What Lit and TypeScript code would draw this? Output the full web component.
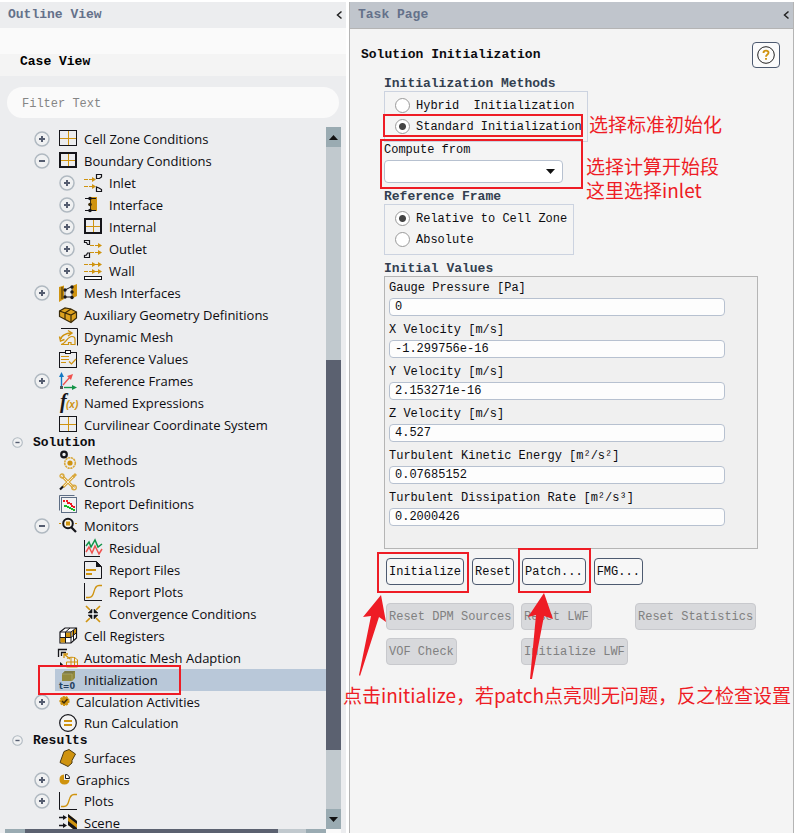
import { LitElement, html, svg, css, nothing } from "lit";
import type { TemplateResult } from "lit";
import { customElement, property } from "lit/decorators.js";
import { classMap } from "lit/directives/class-map.js";

const G = "#cf930f";
const K = "#15151a";

const grid = (w: number) => svg`
  <path d="M9 1V16M1 8.500H17" stroke=${G} stroke-width="1" shape-rendering="crispEdges"/>
  <rect x=${w / 2} y=${w / 2} width=${18 - w} height=${16 - w} fill="none" stroke=${K} stroke-width=${w}/>`;

const flow = (x: number, y: number) => svg`
  <path d="M${x} ${y}h4M${x + 5} ${y}h4" stroke=${G}/>
  <path d="M${x + 8} ${y - 2.5}l4 2.500l-4 2.500z" fill=${G}/>`;

const plot = svg`
  <path d="M.5 0V17.500H18" fill="none" stroke=${K}/>
  <path d="M2 14.500H5C8 14.500 9 12.500 10 8.500S12 2.500 15 2.500H18" fill="none" stroke=${G} stroke-width="1.300"/>`;

const icons: Record<string, TemplateResult | ReturnType<typeof svg>> = {
  grid: grid(1),
  gridBold: grid(2),
  inlet: svg`${flow(0, 5.5)}${flow(0, 12.5)}
    <path d="M12.500 .5H17.500V3L15.500 4.500H12.500ZM12.500 13L15 14L17.500 15.500V17.500H12.500Z" fill="none" stroke=${K} stroke-width="1.200"/>`,
  interface: svg`
    <rect x="6" y="1" width="7" height="14" fill=${G}/>
    <path d="M1 2.500H12M1 14.500H12" stroke=${K}/>
    <path d="M6.500 2V15" stroke=${K} stroke-width=".8"/>
    <circle cx="6" cy="2.500" r="1.800" fill=${K}/><circle cx="6" cy="8.500" r="1.800" fill="#3a2a08"/><circle cx="6" cy="14.500" r="1.800" fill=${K}/>`,
  outlet: svg`${flow(6, 5.5)}${flow(6, 12.5)}
    <path d="M.5 .5H5.500V4.500H3.500L2.500 2.500H.5ZM5.500 13V17.500H.5V15.500L2.500 15L3.500 13Z" fill="none" stroke=${K} stroke-width="1.200"/>`,
  wall: svg`${flow(0, 2.5)}${flow(6, 2.5)}${flow(0, 9.5)}${flow(6, 9.5)}
    <rect x=".5" y="14.500" width="17" height="3" fill="#fff" stroke=${K}/>`,
  meshInterfaces: svg`
    <path d="M0 3L5 1.500V15L0 18ZM13 2L18 0V12L13 14.500Z" fill=${G}/>
    <path d="M3 3V15" stroke="#3a2a08"/>
    <path d="M6 6L13 2.500M6 13L13 13" stroke=${K}/>
    <path d="M6 6V13M13 3V14" stroke="#6b6b70"/>
    <circle cx="6" cy="6" r="1.700" fill=${K}/><circle cx="13" cy="3" r="1.700" fill=${K}/>
    <circle cx="13" cy="8" r="1.700" fill=${K}/><circle cx="6" cy="13" r="1.700" fill=${K}/><circle cx="13" cy="13.500" r="1.700" fill=${K}/>`,
  geometry: svg`
    <path d="M.5 5L6 2L12 3L17.500 6V12L12 16.500L.5 10.500Z" fill="#dda21f" stroke="#3a2a08" stroke-width="1.200"/>
    <path d="M.5 5L12 9L17.500 6M12 9V16M6 7V13M6 7L12 3" fill="none" stroke="#3a2a08" stroke-width="1.200"/>`,
  dynamic: svg`
    <path d="M2 .5H18.500V17.500" fill="none" stroke=${K}/>
    <path d="M2 11C2 8 7 5 12 5M9 2.500L13 5L9 8M.5 8.500L1.500 13L5.500 11.500" fill="none" stroke=${G} stroke-width="1.400"/>
    <path d="M2 16.500C7 16 8 8.500 13 8.500C15.500 8.500 16 9.500 16 11V16.500H12V14.500H9.500V16.500Z" fill="none" stroke=${G} stroke-width="1.200"/>`,
  values: svg`
    <rect x=".5" y="2.500" width="17" height="15" fill="none" stroke=${K}/>
    <rect x="6.500" y=".5" width="5" height="3" fill="#fff" stroke=${K}/>
    <path d="M2 6.500H10M2 9.500H10M2 12.500H7M10 11.500L12.500 14L17 9" fill="none" stroke=${G} stroke-width="1.200"/>`,
  frames: svg`
    <path d="M2.500 4V14" stroke="#1479c4" stroke-width="1.400"/><path d="M0 5L2.500 0L5 5Z" fill="#1479c4"/>
    <path d="M4 13L11 5" stroke="#f0524f" stroke-width="1.400"/><path d="M8 4L14 2L12 8Z" fill="#f0524f"/>
    <path d="M5 15.500H14" stroke="#129447" stroke-width="1.400"/><path d="M13 13L18 15.500L13 18Z" fill="#129447"/>
    <rect x="1" y="14" width="3" height="3" fill="#555"/>`,
  expression: svg`
    <text x="1" y="14" font-family="Liberation Serif, serif" font-size="20" font-weight="bold" font-style="italic" fill=${K}>f</text>
    <text x="7" y="14" font-family="Liberation Sans, sans-serif" font-size="10" font-weight="bold" font-style="italic" fill=${G}>(x)</text>`,
  methods: svg`
    <circle cx="5" cy="3.500" r="2.800" fill="none" stroke=${K} stroke-width="2.200"/>
    <circle cx="11" cy="12" r="5.300" fill="none" stroke="#d9a83c" stroke-width="1.600" stroke-dasharray="2.200 .6"/>
    <circle cx="11" cy="12" r="2.600" fill=${G}/>`,
  controls: svg`
    <path d="M3 3L15 15M4 14L15 3" stroke="#d9a83c" stroke-width="3"/>
    <path d="M3 3L15 15M5 13L15 3" stroke="#f6e8c8" stroke-width="1"/>
    <circle cx="3" cy="3" r="2" fill="none" stroke="#d9a83c" stroke-width="1.300"/>
    <circle cx="15" cy="14.500" r="2.300" fill="none" stroke="#d9a83c" stroke-width="1.300"/>
    <path d="M13 3L16 0L18 2L15 5Z" fill="#d9a83c"/><path d="M1 16.500L4 13.500" stroke=${K} stroke-width="2.200"/>`,
  definitions: svg`
    <path d="M.5 15.500V.5H15.500" fill="none" stroke="#5d6d84"/>
    <rect x="2.500" y="2.500" width="15" height="15" fill="#f3f3f3" stroke="#5d6d84"/>
    <g fill="#f01820"><rect x="4" y="5" width="2" height="2"/><rect x="7" y="5" width="2" height="2"/><rect x="8" y="7" width="3" height="2"/><rect x="11" y="8" width="2" height="2"/><rect x="12" y="10" width="2" height="2"/><rect x="14" y="11" width="2" height="2"/></g>
    <g fill="#15b825"><rect x="5" y="10" width="3" height="2"/><rect x="8" y="11" width="2" height="2"/><rect x="10" y="12" width="2" height="2"/><rect x="12" y="13" width="2" height="2"/><rect x="14" y="14" width="2" height="2"/></g>`,
  monitors: svg`
    <path d="M0 6.500H2M16 6.500H18" stroke=${G}/>
    <circle cx="9" cy="6.500" r="4.800" fill="#f8f4e8" stroke=${K} stroke-width="2"/>
    <rect x="7" y="4.500" width="4" height="4" fill=${G}/><path d="M12 10L17 15" stroke=${K} stroke-width="2.300"/>`,
  residual: svg`
    <path d="M.5 1V17.500H16" fill="none" stroke=${K}/>
    <path d="M2 7L5 3L7 8L11 1L14 8L18 5" fill="none" stroke="#129447" stroke-width="1.500"/>
    <path d="M2 13L5 8L8 14L11 7L15 15L18 10" fill="none" stroke="#f0524f" stroke-width="1.500"/>`,
  file: svg`
    <path d="M.5 .5H12.500L17.500 5.500V17.500H.5Z" fill="none" stroke=${K}/><path d="M12 0L18 6H12Z" fill=${K}/>
    <path d="M2 9H12M2 13H8" stroke=${G} stroke-width="1.800"/>`,
  plot,
  convergence: svg`
    <path d="M2 1L6 5M16 1L12 5M2 17L6 13M16 17L12 13" stroke=${G} stroke-width="1.700"/>
    <path d="M8 4V8H4ZM10 4V8H14ZM8 14V10H4ZM10 14V10H14Z" fill=${K} stroke=${K} stroke-width=".5"/>`,
  registers: svg`
    <path d="M1 5L6 1H17.500V11L12 16H1Z" fill="#fff" stroke=${K} stroke-width="1.200"/>
    <path d="M7 5.500H12V10H7ZM1.500 10.500H6.500V15.500H1.500ZM13 4.500L17 1.500V6L13 9Z" fill=${G}/>
    <path d="M1 5H12L17 1M12 5V16M6.500 5V16M1 10.500H12L17 6M6.500 5L11 1M14.500 3V13" fill="none" stroke=${K}/>`,
  adaption: svg`
    <path d="M-.5 8V.5H8M2.500 7V3.500H7" fill="none" stroke=${K} stroke-width="1.300"/>
    <path d="M5 5L11 10M5 9V5H9" fill="none" stroke=${G} stroke-width="1.300"/>
    <path d="M8 10C9 8 16 7 18.500 11V18H7.500V13H18.500M12 8V18M15.500 8V18" fill="none" stroke=${G}/>
    <path d="M1 13L4 15.500L1 18Z" fill=${K}/>`,
  initialization: svg`
    <path d="M3 3L6 0H16V7L13 10H3Z" fill="#938a3d"/><path d="M3 3H13L16 0H6Z" fill="#7d7a45"/>
    <path d="M3 3H13V10" fill="none" stroke="#b3ad72" stroke-width=".7"/>
    <text x="0" y="18" font-family="DejaVu Sans, sans-serif" font-size="8" font-weight="bold" fill="#25415f">t=0</text>`,
  run: svg`<circle cx="9" cy="9" r="8.300" fill="#f4f4f4" stroke=${K} stroke-width="1.200"/>
    <path d="M5 7H13M5 11H13" stroke=${G} stroke-width="2"/>`,
  surfaces: svg`<path d="M1 13.500L5 2.500L10 .5L16.500 5L13 11.500L13 14L9 17.500Z" fill=${G} stroke="#4b3a12"/>`,
  scene: svg`
    <path d="M0 3.500H6M0 11.500H6" stroke=${K} stroke-width="1.500"/><path d="M4 1L8 3.500L4 6ZM4 9L8 11.500L4 14Z" fill=${K}/>
    <path d="M9 0L18 7V18L9 11Z" fill=${G}/><path d="M9 0L18 7V10L9 3ZM9 7L18 14V18L9 11Z" fill=${K}/>`,
  activities: svg`
    <circle cx="5.500" cy="5" r="4.300" fill=${G} stroke=${G} stroke-width="1.600" stroke-dasharray="2 1"/>
    <path d="M3 5L5 7L8.500 3" fill="none" stroke="#3a2a08" stroke-width="1.500"/>`,
  graphics: svg`
    <path d="M5 .5A5 5 0 1 0 10.500 6H5Z" fill=${G}/><path d="M6.500 .5V4.500H10.500C10.500 2 9 .5 6.500 .5Z" fill="#fff" stroke=${K}/>`,
};

interface Item {
  label: string;
  level: number;
  icon?: string;
  fold?: "+" | "-";
  small?: boolean;
  selected?: boolean;
}

const items: Item[] = [
  { label: "Cell Zone Conditions", level: 1, icon: "grid", fold: "+" },
  { label: "Boundary Conditions", level: 1, icon: "gridBold", fold: "-" },
  { label: "Inlet", level: 2, icon: "inlet", fold: "+" },
  { label: "Interface", level: 2, icon: "interface", fold: "+" },
  { label: "Internal", level: 2, icon: "gridBold", fold: "+" },
  { label: "Outlet", level: 2, icon: "outlet", fold: "+" },
  { label: "Wall", level: 2, icon: "wall", fold: "+" },
  { label: "Mesh Interfaces", level: 1, icon: "meshInterfaces", fold: "+" },
  { label: "Auxiliary Geometry Definitions", level: 1, icon: "geometry" },
  { label: "Dynamic Mesh", level: 1, icon: "dynamic" },
  { label: "Reference Values", level: 1, icon: "values" },
  { label: "Reference Frames", level: 1, icon: "frames", fold: "+" },
  { label: "Named Expressions", level: 1, icon: "expression" },
  { label: "Curvilinear Coordinate System", level: 1, icon: "grid" },
  { label: "Solution", level: 0, fold: "-" },
  { label: "Methods", level: 1, icon: "methods" },
  { label: "Controls", level: 1, icon: "controls" },
  { label: "Report Definitions", level: 1, icon: "definitions" },
  { label: "Monitors", level: 1, icon: "monitors", fold: "-" },
  { label: "Residual", level: 2, icon: "residual" },
  { label: "Report Files", level: 2, icon: "file" },
  { label: "Report Plots", level: 2, icon: "plot" },
  { label: "Convergence Conditions", level: 2, icon: "convergence" },
  { label: "Cell Registers", level: 1, icon: "registers" },
  { label: "Automatic Mesh Adaption", level: 1, icon: "adaption" },
  { label: "Initialization", level: 1, icon: "initialization", selected: true },
  { label: "Calculation Activities", level: 1, icon: "activities", fold: "+", small: true },
  { label: "Run Calculation", level: 1, icon: "run" },
  { label: "Results", level: 0, fold: "-" },
  { label: "Surfaces", level: 1, icon: "surfaces" },
  { label: "Graphics", level: 1, icon: "graphics", fold: "+", small: true },
  { label: "Plots", level: 1, icon: "plot", fold: "+" },
  { label: "Scene", level: 1, icon: "scene" },
];

const shared = css`
  * { box-sizing: border-box; }
  button, input, select { font: inherit; color: inherit; margin: 0; }
  .bar {
    display: flex; justify-content: space-between; align-items: center;
    height: 26px; padding: 0 3px 0 8px;
    font-weight: bold; font-size: 13px; color: #64718a;
  }
  .bar h2 { margin: 0; font-size: 13px; line-height: 16px; }
  .collapse { display: flex; border: 0; padding: 0; background: none; }
`;

const collapse = html`<button class="collapse" aria-label="Collapse">
  <svg width="7" height="10" viewBox="0 0 7 10"><path d="M5.500 1.500L1.500 5L5.500 8.500" fill="none" stroke="#222" stroke-width="1.500"/></svg>
</button>`;

@customElement("outline-view")
export class OutlineView extends LitElement {
  static styles = [shared, css`
    :host { display: flex; flex-direction: column; min-height: 0; background: #ecedef; }
    .spacer { height: 26px; flex: none; background: #fafafa; }
    .bar { flex: none; }
    .case { flex: none; height: 22px; margin: 0; padding-left: 20px; background: #f4f4f4; font-size: 13px; line-height: 16px; color: #000; }
    .search { flex: none; padding: 11px 7px 9px; }
    .search input {
      display: block; width: 100%; height: 31px; padding: 2px 15px 0;
      border: 0; border-radius: 16px; background: #fafafa; font-size: 12px;
    }
    .search input::placeholder { color: #858585; opacity: 1; }
    .area {
      flex: 1; min-height: 0; margin-right: 5px;
      display: grid; grid-template: minmax(0, 1fr) 4px / minmax(0, 1fr) 15px;
    }
    .tree { overflow: hidden; list-style: none; margin: 0; padding: 1px 0 0; font: 13px/22px "Open Sans", sans-serif; color: #0c0c10; }
    .row { display: flex; align-items: center; height: 22px; padding-left: 34px; white-space: nowrap; }
    .row.deep { padding-left: 59px; }
    .row.small { height: 21px; }
    .row.head { height: 13px; padding-left: 12px; font: bold 13px/13px "Liberation Mono", monospace; }
    .fold {
      flex: none; width: 16px; height: 16px; padding: 0; display: flex;
      border: 0; background: none;
    }
    .head .fold { width: 11px; height: 11px; margin-right: 10px; }
    .icon { flex: none; width: 18px; height: 18px; overflow: visible; margin: 0 7px 0 9px; }
    .small .icon { width: 11px; height: 11px; margin-right: 6px; }
    .nofold { width: 16px; flex: none; }
    .row.selected { background: linear-gradient(90deg, transparent 55px, #b9c8d9 55px); }
    .v { display: flex; flex-direction: column; background: #c1c9ce; }
    .v .end, .h .end { display: flex; align-items: center; justify-content: center; flex: none; background: #9aabb2; }
    .v .end { height: 20px; }
    .v .before { flex: 213; }
    .v .thumb { flex: 390; background: #5b6170; }
    .v .after { flex: 59; }
    .h { display: flex; background: #c1c9ce; margin-left: 5px; }
    .h .end { width: 20px; }
    .h .thumb { flex: 253; background: #5b6170; }
    .h .after { flex: 28; }
    .corner { background: #fafafa; }
  `];

  private fold(item: Item) {
    if (!item.fold) return item.level ? html`<span class="nofold"></span>` : nothing;
    return html`<button class="fold" aria-label=${(item.fold === "+" ? "Expand " : "Collapse ") + item.label}>
      <svg width="100%" height="100%" viewBox="0 0 16 16">
        <circle cx="8" cy="8" r="7" fill="#f0f1f2" stroke="#b0b9c1" stroke-width="1.500"/>
        <path d=${item.fold === "+" ? "M5 8H11M8 5V11" : "M5 8H11"} stroke="#555d70" stroke-width="2"/>
      </svg>
    </button>`;
  }

  render() {
    return html`
      <div class="bar"><h2>Outline View</h2>${collapse}</div>
      <div class="spacer"></div>
      <h3 class="case">Case View</h3>
      <div class="search"><input type="text" placeholder="Filter Text" aria-label="Filter Text"></div>
      <div class="area">
        <ul class="tree">
          ${items.map((item) => html`
            <li class=${classMap({ row: true, deep: item.level === 2, head: item.level === 0, small: !!item.small, selected: !!item.selected })}>
              ${this.fold(item)}
              ${item.icon ? html`<svg class="icon" viewBox=${item.small ? "0 0 11 11" : "0 0 18 18"}>${icons[item.icon]}</svg>` : nothing}
              <span>${item.label}</span>
            </li>`)}
        </ul>
        <div class="v">
          <span class="end"><svg width="9" height="5" viewBox="0 0 9 5"><path d="M0 5L4.500 0L9 5Z" fill="#111"/></svg></span>
          <span class="before"></span><span class="thumb"></span><span class="after"></span>
          <span class="end"><svg width="9" height="5" viewBox="0 0 9 5"><path d="M0 0L4.500 5L9 0Z" fill="#111"/></svg></span>
        </div>
        <div class="h"><span class="end"></span><span class="thumb"></span><span class="after"></span><span class="end"></span></div>
        <div class="corner"></div>
      </div>`;
  }
}

const fields = [
  ["Gauge Pressure [Pa]", "0"],
  ["X Velocity [m/s]", "-1.299756e-16"],
  ["Y Velocity [m/s]", "2.153271e-16"],
  ["Z Velocity [m/s]", "4.527"],
  ["Turbulent Kinetic Energy [m²/s²]", "0.07685152"],
  ["Turbulent Dissipation Rate [m²/s³]", "0.2000426"],
];

@customElement("task-page")
export class TaskPage extends LitElement {
  @property() heading = "Solution Initialization";

  static styles = [shared, css`
    :host { display: block; background: #f4f4f4; border: solid #b4b4b4; border-width: 0 1px; font-size: 12px; }
    .bar { background: #c0c5cc; height: 27px; border-bottom: 1px solid #b4b4b4; }
    .title { display: flex; justify-content: space-between; align-items: center; margin: 13px 13px 0 11px; }
    h1 { margin: 0; font-size: 13px; line-height: 16px; }
    .help { display: flex; align-items: center; justify-content: center; width: 28px; height: 26px; padding: 0; border: 1px solid #4d5a70; border-radius: 4px; background: #fbfbfb; }
    .form { padding: 2px 35px 0 34px; }
    fieldset { margin: 0; padding: 0; border: 0; min-width: 0; }
    legend { display: block; padding: 7px 0 0; font-weight: bold; font-size: 13px; line-height: 14px; color: #333f50; }
    .radios { width: 204px; padding: 3px 10px 4px; border: 1px solid #ccd3e0; }
    .radios.narrow { width: 190px; }
    .radios label { display: flex; align-items: center; gap: 6px; height: 21px; white-space: pre; }
    .radios input {
      appearance: none; flex: none; width: 15px; height: 15px; border: 1px solid #9a9a9a; border-radius: 50%; background: #fff;
    }
    .radios input:checked { background: radial-gradient(circle, #444 0 3px, #fff 4px); }
    .compute label { display: block; line-height: 16px; margin-bottom: 2px; }
    .picker { display: grid; align-items: center; width: 179px; }
    .picker > * { grid-area: 1 / 1; }
    .picker select { appearance: none; width: 100%; height: 23px; padding: 0 24px 0 8px; border: 1px solid #b7c1d0; border-radius: 4px; background: #fff; }
    .picker svg { justify-self: end; margin-right: 8px; pointer-events: none; }
    .values { display: grid; gap: 6px; padding: 3px 32px 22px 4px; border: 1px solid #b5b5b5; background: #f0f0f0; }
    .field label { display: block; line-height: 16px; margin-bottom: 2px; white-space: nowrap; }
    .field input { display: block; width: 100%; height: 18px; padding: 0 5px; border: 1px solid #b7c1d0; border-radius: 4px; background: #fdfdfd; }
    .actions { display: flex; gap: 8px; margin: 9px 0 18px 2px; }
    .more { display: grid; grid-template-columns: 135px 114px auto; justify-content: start; justify-items: start; gap: 8px 0; margin-left: 2px; }
    .btn { height: 27px; padding: 0 2px; border: 1px solid #4d5a70; border-radius: 4px; background: #f7f7f7; white-space: nowrap; }
    .btn:disabled { color: #808080; background: #d8d9dc; border-color: #c8c9cd; }
  `];

  private radios(name: string, options: string[], checked: number, narrow = false) {
    return html`<div class=${classMap({ radios: true, narrow })}>
      ${options.map((o, i) => html`<label><input type="radio" name=${name} ?checked=${i === checked}>${o}</label>`)}
    </div>`;
  }

  render() {
    return html`
      <div class="bar"><h2>Task Page</h2>${collapse}</div>
      <div class="title">
        <h1>${this.heading}</h1>
        <button class="help" aria-label="Help">
          <svg width="18" height="18" viewBox="0 0 18 18">
            <circle cx="9" cy="9" r="8.300" fill="none" stroke="#222"/>
            <path d="M6.500 7C6.500 3.800 11.700 3.900 11.500 6.800C11.400 8.400 9 8.500 9 10.700M9 12V13.800" fill="none" stroke=${G} stroke-width="1.900"/>
          </svg>
        </button>
      </div>
      <div class="form">
        <fieldset><legend>Initialization Methods</legend>
          ${this.radios("method", ["Hybrid  Initialization", "Standard Initialization"], 1)}
        </fieldset>
        <div class="compute">
          <label for="from">Compute from</label>
          <div class="picker">
            <select id="from"><option></option><option>inlet</option></select>
            <svg width="9" height="5" viewBox="0 0 9 5"><path d="M0 0H9L4.500 5Z" fill="#111"/></svg>
          </div>
        </div>
        <fieldset><legend>Reference Frame</legend>
          ${this.radios("frame", ["Relative to Cell Zone", "Absolute"], 0, true)}
        </fieldset>
        <fieldset><legend>Initial Values</legend>
          <div class="values">
            ${fields.map(([label, value], i) => html`<div class="field">
              <label for=${"f" + i}>${label}</label><input id=${"f" + i} type="text" .value=${value}>
            </div>`)}
          </div>
        </fieldset>
        <div class="actions">
          ${["Initialize", "Reset", "Patch...", "FMG..."].map((t) => html`<button class="btn">${t}</button>`)}
        </div>
        <div class="more">
          <button class="btn" disabled>Reset DPM Sources</button>
          <button class="btn" disabled>Reset LWF</button>
          <button class="btn" disabled>Reset Statistics</button>
          <button class="btn" disabled>VOF Check</button>
          <button class="btn" disabled>Initialize LWF</button>
        </div>
      </div>`;
  }
}

@customElement("app-root")
export class AppRoot extends LitElement {
  static styles = css`
    :host {
      position: relative; box-sizing: border-box; overflow: hidden;
      display: grid; grid-template-columns: 346px minmax(0, 1fr); gap: 3px;
      height: 100vh; padding: 2px 3px 0 0; background: #fff;
      font-family: "Liberation Mono", monospace; color: #0c0c10;
    }
    .notes { position: absolute; inset: 0; pointer-events: none; }
    .box { position: absolute; box-sizing: border-box; border: 2px solid #ee1c25; }
    .tree-item { left: 38px; top: 665px; width: 143px; height: 30px; }
    .standard { left: 383px; top: 114px; width: 200px; height: 23px; }
    .compute { left: 380px; top: 139px; width: 203px; height: 50px; }
    .init { left: 377px; top: 552px; width: 92px; height: 41px; }
    .patch { left: 518px; top: 548px; width: 73px; height: 45px; }
    .note {
      position: absolute; margin: 0; white-space: nowrap; color: #ee1c25;
      font: 19px/24px "Noto Sans CJK SC", sans-serif;
    }
    .note-standard { left: 589px; top: 112px; }
    .note-compute { left: 586px; top: 154px; }
    .note-init { left: 343px; top: 683px; }
    .arrows { position: absolute; left: 350px; top: 590px; }
  `;

  render() {
    return html`
      <outline-view></outline-view>
      <task-page></task-page>
      <div class="notes">
        <div class="box tree-item"></div>
        <div class="box standard"></div>
        <div class="box compute"></div>
        <div class="box init"></div>
        <div class="box patch"></div>
        <svg class="arrows" width="210" height="95" viewBox="350 590 210 95" fill="#ee1c25">
          <path d="M381 595L386 622L379 617L360 676L359 675L371 616L363 617Z"/>
          <path d="M544 593L553 619L544 616L532 679L530 679L536 615L528 617Z"/>
        </svg>
        <p class="note note-standard">选择标准初始化</p>
        <p class="note note-compute">选择计算开始段<br>这里选择inlet</p>
        <p class="note note-init">点击initialize，若patch点亮则无问题，反之检查设置</p>
      </div>`;
  }
}
